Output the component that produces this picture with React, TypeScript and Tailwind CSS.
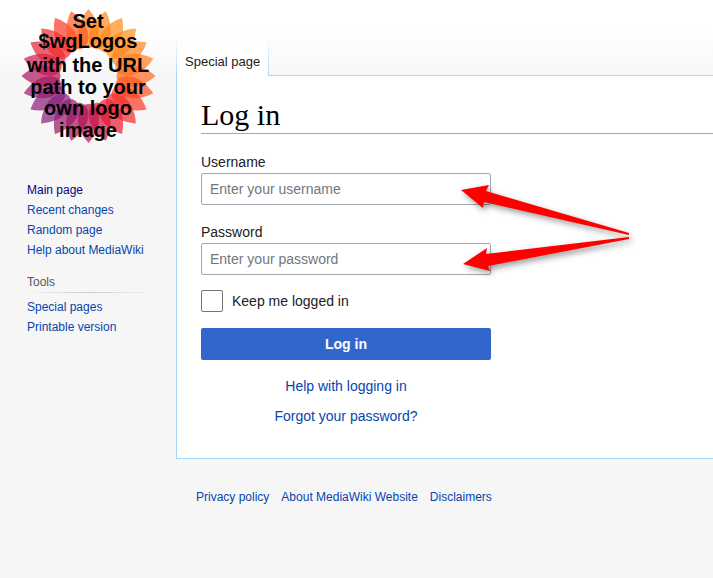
const NAV_LINKS = ['Recent changes', 'Random page', 'Help about MediaWiki'];
const TOOL_LINKS = ['Special pages', 'Printable version'];
const FOOTER_LINKS = ['Privacy policy', 'About MediaWiki Website', 'Disclaimers'];

const LOGO_LINES = [
  { text: 'Set', y: 28 },
  { text: '$wgLogos', y: 48 },
  { text: 'with the URL', y: 72 },
  { text: 'path to your', y: 94 },
  { text: 'own logo', y: 115 },
  { text: 'image', y: 137 },
];

// one petal every 15 degrees, clockwise from the top
const PETALS = [
  '#ff7a1c', '#ff8618', '#ff8c18', '#ff8c18', '#ff8418', '#ff7a18',
  '#ff6a1c', '#ff5220', '#ff3a24', '#fa2a2c', '#f01c30', '#dc143c',
  '#c0104a', '#a81258', '#961a68', '#86207a', '#881e78', '#98186c',
  '#ac165c', '#cc1a48', '#e42236', '#f22a2c', '#fa3824', '#ff5a20',
];

const Logo = () => (
  <svg className="block w-full" viewBox="0 0 160 160" role="img" aria-label="Wiki logo">
    {PETALS.map((color, i) => (
      <path
        key={i}
        d="M88.5 9 C94 15 99 24 99 33 C99 41 95 48 88.5 48 C82 48 78 41 78 33 C78 24 83 15 88.5 9 Z"
        fill={color}
        fillOpacity="0.7"
        transform={`rotate(${i * 15} 88.5 76)`}
      />
    ))}
    <g fontFamily="Liberation Sans, Arial, sans-serif" fontSize="20" fontWeight="700" textAnchor="middle">
      {LOGO_LINES.map(line => (
        <text key={line.text} x="88" y={line.y}>{line.text}</text>
      ))}
    </g>
  </svg>
);

const Arrows = () => (
  <svg
    className="absolute left-[260px] top-8 w-[172px] h-[94px] overflow-visible pointer-events-none drop-shadow-[2px_3px_3px_rgba(0,0,0,0.4)]"
    viewBox="461 183 172 94"
    fill="#ff0000"
    aria-hidden="true"
  >
    <path d="M461 190 L489 185 L486 191 L629 233 L629 235 L484 202 L483 208 Z" />
    <path d="M463 264 L487 248 L486 254 L629 237 L629 239 L488 266 L490 271 Z" />
  </svg>
);

const Field = ({ id, label, type, placeholder }: { id: string; label: string; type: string; placeholder: string }) => (
  <div>
    <label htmlFor={id} className="block leading-[22px]">{label}</label>
    <input
      id={id}
      type={type}
      placeholder={placeholder}
      className="block w-full h-8 px-2 bg-white border border-[#a2a9b1] rounded-[2px] placeholder:text-[#72777d]"
    />
  </div>
);

const SideLink = ({ text, visited }: { text: string; visited?: boolean }) => (
  <li>
    <a href="#" className={visited ? 'text-[#0b0080]' : 'text-[#0645ad]'}>{text}</a>
  </li>
);

export default function App() {
  return (
    <div className="min-h-screen bg-[#f6f6f6] font-['Liberation_Sans',Arial,sans-serif] text-[#202122]">
      <div className="flex bg-[linear-gradient(#ffffff_30px,#f6f6f6_80px)]">
        <aside className="w-44 shrink-0 text-xs leading-5">
          <a href="#" className="block w-40"><Logo /></a>
          <nav className="pl-[27px] pt-5">
            <ul>
              <SideLink text="Main page" visited />
              {NAV_LINKS.map(text => <SideLink key={text} text={text} />)}
            </ul>
            <h3 className="mt-3 mr-5 text-[#54595d]">Tools</h3>
            <div className="h-px mr-5 mb-1 bg-linear-to-r from-transparent via-[#c8ccd1] to-transparent" />
            <ul>
              {TOOL_LINKS.map(text => <SideLink key={text} text={text} />)}
            </ul>
          </nav>
        </aside>

        <div className="flex-1 min-w-0">
          <div className="flex pt-9">
            <div className="w-px bg-linear-to-b from-white to-[#a7d7f9]" />
            <a href="#" className="h-10 px-2 pt-4 bg-linear-to-b from-transparent to-white to-30% text-[13px] leading-5 whitespace-nowrap">Special page</a>
            <div className="w-px bg-linear-to-b from-white to-[#a7d7f9]" />
            <div className="flex-1 border-b border-[#a7d7f9]" />
          </div>

          <main className="border-l border-b border-[#a7d7f9] bg-white pl-6 pt-5 pb-[31px]">
            <h1 className="h-[38px] border-b border-[#a2a9b1] font-['Liberation_Serif',serif] text-[30px] leading-[38px] text-black">Log in</h1>
            <form className="relative w-[290px] mt-[17px] text-sm" onSubmit={e => e.preventDefault()}>
              <div className="flex flex-col gap-4">
                <Field id="username" label="Username" type="text" placeholder="Enter your username" />
                <Field id="password" label="Password" type="password" placeholder="Enter your password" />
              </div>
              <label className="flex items-center gap-[9px] mt-[15px]">
                <input type="checkbox" className="appearance-none size-[22px] bg-white border border-[#72777d] rounded-[2px] checked:bg-[#3366cc]" />
                Keep me logged in
              </label>
              <button type="submit" className="block w-full h-8 mt-4 rounded-[2px] bg-[#3366cc] font-bold text-white">Log in</button>
              <div className="flex flex-col items-center gap-2 mt-[15px] leading-[22px] text-[#0645ad]">
                <a href="#">Help with logging in</a>
                <a href="#">Forgot your password?</a>
              </div>
              <Arrows />
            </form>
          </main>

          <footer className="pl-5 pt-7">
            <ul className="flex flex-wrap gap-x-3 text-xs leading-5 text-[#0645ad]">
              {FOOTER_LINKS.map(text => <li key={text}><a href="#">{text}</a></li>)}
            </ul>
          </footer>
        </div>
      </div>
    </div>
  );
}
